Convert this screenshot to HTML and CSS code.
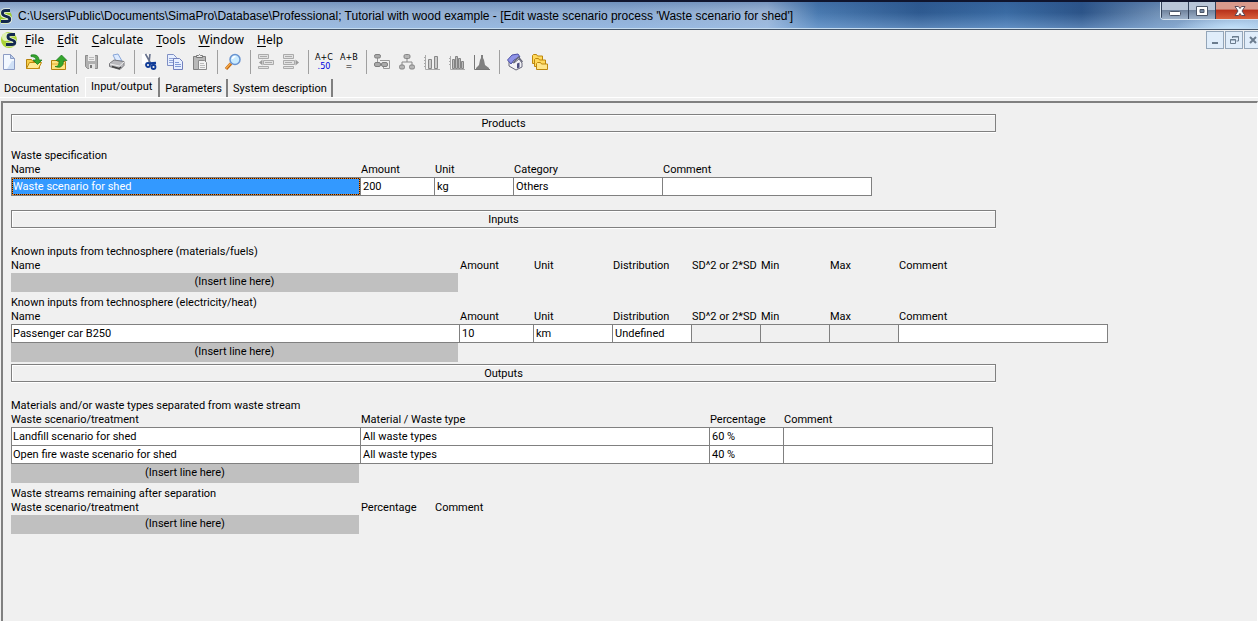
FILE: index.html
```html
<!DOCTYPE html>
<html lang="en">
<head>
<meta charset="utf-8">
<title>SimaPro</title>
<link rel="stylesheet" href="styles.css">
</head>
<body>
<header class="titlebar">
  <svg class="app-logo" viewBox="0 0 16 18" aria-hidden="true">
    <circle cx="5" cy="10" r="7" fill="#9ccb2c"/><path d="M10 3.500H5.500C1.500 3.500 1.500 8 5 9L7 9.600C11 10.600 10.500 14.500 7 14.500H1" fill="none" stroke="#eef6e0" stroke-width="4.500"/><path d="M10 3.500H5.500C1.500 3.500 1.500 8 5 9L7 9.600C11 10.600 10.500 14.500 7 14.500H1" fill="none" stroke="#13294f" stroke-width="2.800"/>
  </svg>
  <h1 class="title">C:\Users\Public\Documents\SimaPro\Database\Professional; Tutorial with wood example - [Edit waste scenario process 'Waste scenario for shed']</h1>
  <div class="window-buttons">
    <button class="win" aria-label="Minimize"><svg viewBox="0 0 14 12"><rect x="1.500" y="6.500" width="11" height="4" rx="1" fill="#fff" stroke="#4a5568"/></svg></button>
    <button class="win" aria-label="Maximize"><svg viewBox="0 0 14 12"><path d="M1.500 1.500h11v9h-11zM5 4.500h4v3H5z" fill="#fff" fill-rule="evenodd" stroke="#4a5568"/></svg></button>
    <button class="win win-close" aria-label="Close"><svg viewBox="0 0 14 12"><path d="M2 1.500h3.500L7 3.500l1.500-2H12L9 6l3 4.500H8.500L7 8.500l-1.500 2H2L5 6z" fill="#fff" stroke="#5a4a58"/></svg></button>
  </div>
</header>

<div class="menubar">
  <svg class="menu-logo" viewBox="0 0 18 18" aria-hidden="true">
    <circle cx="9" cy="9" r="8" fill="#a9d235"/><circle cx="6" cy="6" r="4" fill="#e2f2b4"/><path d="M15 3.500H11C7 3.500 7 7.500 10.500 8.500L12 9C16 10 15.500 13.500 12 13.500H6" fill="none" stroke="#eef6e0" stroke-width="4.200"/><path d="M15 3.500H11C7 3.500 7 7.500 10.500 8.500L12 9C16 10 15.500 13.500 12 13.500H6" fill="none" stroke="#13294f" stroke-width="2.800"/>
  </svg>
  <nav class="menu" aria-label="Main">
    <button><u>F</u>ile</button>
    <button><u>E</u>dit</button>
    <button><u>C</u>alculate</button>
    <button><u>T</u>ools</button>
    <button><u>W</u>indow</button>
    <button><u>H</u>elp</button>
  </nav>
  <div class="child-buttons">
    <button class="child" aria-label="Minimize document"><svg viewBox="0 0 16 16"><path d="M5 11h6" stroke="#6b7c8e" stroke-width="2"/></svg></button>
    <button class="child" aria-label="Restore document"><svg viewBox="0 0 16 16"><path d="M6.500 6V4.500h6V9h-2M6 5h7" fill="none" stroke="#6b7c8e"/><path d="M4.500 7.500h5v4h-5zM4 8h6" fill="none" stroke="#6b7c8e"/></svg></button>
    <button class="child" aria-label="Close document"><svg viewBox="0 0 16 16"><path d="M5 5l6 6M11 5l-6 6" stroke="#6b7c8e" stroke-width="2"/></svg></button>
  </div>
</div>

<div class="toolbar" role="toolbar" aria-label="Tools">
  <div class="group">
    <button class="tool" aria-label="New"><svg viewBox="0 0 18 18"><path d="M3.500 1.500h7l4 4v11h-11z" fill="#f2f8ff" stroke="#8c9cc4"/><path d="M10.500 1.500v4h4z" fill="#b9cdec" stroke="#8c9cc4"/><path d="M12 8h2v8H7z" fill="#cfe0f6"/></svg></button>
    <button class="tool" aria-label="Open"><svg viewBox="0 0 18 18"><path d="M1.500 15.500v-9h5l1.500 2h6.500v7z" fill="#f7cf4c" stroke="#b5810c"/><path d="M1.500 15.500l3-6h12l-3 6z" fill="#ffea95" stroke="#c08a10"/><path d="M6 2c5-1 8 1 8 5h3l-4.500 4.500L8 7h3c0-2-2-3.500-5-3.500z" fill="#35a62c" stroke="#15751a" stroke-width=".7"/></svg></button>
    <button class="tool" aria-label="Save to"><svg viewBox="0 0 18 18"><path d="M1.500 16.500v-9h5l1 1h8v8z" fill="#ffe382" stroke="#b5810c"/><path d="M2 11h13" stroke="#e7ad2c"/><path d="M5 13.500c3 0 4-1 4-6H6L11.500 2 17 7.500h-3.500c0 6-3 8-8.500 6z" fill="#35a62c" stroke="#15751a" stroke-width=".7"/></svg></button>
  </div>
  <div class="group">
    <button class="tool" aria-label="Save"><svg viewBox="0 0 18 18"><path d="M2.500 2.500h12v13h-10l-2-2z" fill="#b0b0b0" stroke="#8c8c8c"/><path d="M5 2h7v6H5z" fill="#ededed"/><path d="M6 11h6v5H6z" fill="#e4e4e4"/><path d="M7 12h2v3H7z" fill="#777"/><path d="M6 4.500h5M6 6.500h5" stroke="#bbb"/></svg></button>
    <button class="tool" aria-label="Print"><svg viewBox="0 0 18 18"><path d="M5 2l5-1 4 7H8z" fill="#dceaff" stroke="#88a6d8"/><path d="M1.500 10.500L6 7l10 1.500v4L12 16.500l-10.500-3z" fill="#b9b9bd" stroke="#77777b"/><path d="M2 11l9.500 2L16 9" fill="none" stroke="#eee"/><path d="M4 13.500l7 2 2-1.500" stroke="#444" stroke-width="1.500" fill="none"/></svg></button>
  </div>
  <div class="group">
    <button class="tool" aria-label="Cut"><svg viewBox="0 0 18 18"><path d="M1 1h6v10H1z" fill="#fff"/><path d="M4.500 1l5 9M9 1l-1 9" stroke="#68728c" stroke-width="1.600"/><circle cx="7" cy="12" r="2" fill="none" stroke="#103c98" stroke-width="1.800"/><circle cx="12.500" cy="14" r="2" fill="none" stroke="#103c98" stroke-width="1.800"/><path d="M9 10.500l6-.5" stroke="#103c98" stroke-width="2.500"/></svg></button>
    <button class="tool" aria-label="Copy"><svg viewBox="0 0 18 18"><path d="M1.500 1.500h6l3 3v8h-9z" fill="#e7efff" stroke="#7f8fc4"/><path d="M3 5.500h5M3 7.500h5M3 9.500h4" stroke="#91a5d8"/><path d="M7.500 5.500h6l3 3v8h-9z" fill="#e7efff" stroke="#7280bd"/><path d="M9 9.500h4M9 11.500h6M9 13.500h6" stroke="#819ad6"/></svg></button>
    <button class="tool" aria-label="Paste"><svg viewBox="0 0 18 18"><path d="M2.500 3.500h12v13h-12z" fill="#b8b8b8" stroke="#7f7f7f"/><path d="M5.500 4.500v-2h2l1-1 1 1h2v2z" fill="#eee" stroke="#777"/><path d="M7.500 7.500h6l2 2v7h-8z" fill="#f3f3f3" stroke="#8a8a8a"/><path d="M9 10.500h4M9 12.500h5M9 14.500h5" stroke="#bbb"/></svg></button>
  </div>
  <div class="group">
    <button class="tool" aria-label="Search"><svg viewBox="0 0 18 18"><path d="M7 10.500L2 16" stroke="#c4660c" stroke-width="3.200"/><path d="M6.500 10.500L2 15.500" stroke="#f5ad4e" stroke-width="1.200"/><circle cx="11" cy="6.500" r="5" fill="#c9ebff" stroke="#6893d0" stroke-width="1.500"/><path d="M8.500 6a3 3 0 0 1 3-2.500" stroke="#fff" stroke-width="1.500" fill="none"/></svg></button>
  </div>
  <div class="group">
    <button class="tool" aria-label="Insert line"><svg viewBox="0 0 18 18"><path d="M1.500 1.500h10v4h-10zM6.500 7.500h10v4h-10zM1.500 13.500h10v2h-10zM3 3.500h7M8 9.500h7" fill="#e2e2e2" stroke="#ababab"/><path d="M5.500 6.500v6L2 9.500z" fill="#999"/></svg></button>
    <button class="tool" aria-label="Delete line"><svg viewBox="0 0 18 18"><path d="M1.500 1.500h10v4h-10zM1.500 7.500h11v4h-11zM1.500 13.500h10v2h-10zM3 3.500h7M3 9.500h7" fill="#e2e2e2" stroke="#ababab"/><path d="M13.500 6.500v6L17 9.500z" fill="#999"/></svg></button>
  </div>
  <div class="group">
    <button class="tool calc"><span>A+C</span><span class="calc-blue">.50</span></button>
    <button class="tool calc"><span>A+B</span><span>=</span></button>
  </div>
  <div class="group">
    <button class="tool" aria-label="Network"><svg viewBox="0 0 18 18"><path d="M4.500 4v8M7 7.500h9.500v8h-6v-3" fill="none" stroke="#999"/><g fill="#aaa" stroke="#808080"><rect x="1.500" y="1.500" width="6" height="3.500" rx="1.500"/><rect x="1.500" y="9.500" width="6" height="4" rx="1.500"/><rect x="8.500" y="9.500" width="6" height="4" rx="1.500"/></g></svg></button>
    <button class="tool" aria-label="Tree"><svg viewBox="0 0 18 18"><path d="M9 5v4M4 12V9h10v3" fill="none" stroke="#888"/><g fill="#b5b5b5" stroke="#858585"><rect x="6" y="1.500" width="6" height="4" rx="1.500"/><rect x="1.500" y="12" width="5" height="4" rx="1.500"/><rect x="11.500" y="12" width="5" height="4" rx="1.500"/></g></svg></button>
    <button class="tool" aria-label="Bar chart"><svg viewBox="0 0 18 18"><path d="M2.500 2v14.500H17M1 4.500h1M1 7.500h1M1 10.500h1M1 13.500h1" fill="none" stroke="#aaa"/><path d="M5.500 6.500h3v9h-3zM11.500 3.500h3v12h-3z" fill="#ccc" stroke="#888"/></svg></button>
    <button class="tool" aria-label="Grouped chart"><svg viewBox="0 0 18 18"><path d="M2.500 3v13.500H17M1 5.500h1M1 8.500h1M1 11.500h1" fill="none" stroke="#aaa"/><path d="M4.500 6.500h2v9h-2zM7.500 3.500h2v12h-2zM10.500 5.500h2v10h-2zM13.500 8.500h2v7h-2z" fill="#bbb" stroke="#858585"/></svg></button>
    <button class="tool" aria-label="Distribution"><svg viewBox="0 0 18 18"><path d="M1.500 2v14.500H17" fill="none" stroke="#777"/><path d="M3 16v-1l3-3 1-5 1-2V2h2v3l1 2 1 5 4 3v1z" fill="#808080"/></svg></button>
  </div>
  <div class="group">
    <button class="tool" aria-label="Home"><svg viewBox="0 0 18 18"><path d="M3 8l5 2 5-4 3 4v4l-6 3-7-4z" fill="#f2f2f6" stroke="#66677a"/><path d="M1.500 7L6 2l6-1 2 3-6 3-3 4z" fill="#8f93e8" stroke="#4b4fa4"/><path d="M7.500 9.500L12.500 4l4 5" fill="none" stroke="#66677a" stroke-width="1.300"/><path d="M11 10.500l2.500-1v5l-2.500 1z" fill="#4c4d80"/></svg></button>
    <button class="tool" aria-label="Folders"><svg viewBox="0 0 18 18"><g fill="#ffd95c" stroke="#bd870d"><path d="M1.500 10.500v-8l1-1h3l1 1.500h5v7.500z"/><path d="M3.500 13.500v-7l1-1h3l1 1.500h6v6.500z"/><path d="M5.500 16.500v-6l1-1h3l1 1.500h6v5.500z" fill="#ffe68a"/></g></svg></button>
  </div>
</div>

<div class="tabs" role="tablist">
  <button class="tab tab-first" role="tab" aria-selected="false">Documentation</button>
  <button class="tab tab-active" role="tab" aria-selected="true">Input/output</button>
  <button class="tab" role="tab" aria-selected="false">Parameters</button>
  <button class="tab" role="tab" aria-selected="false">System description</button>
</div>

<main class="panel">
  <h2 class="band">Products</h2>
  <section class="block block-last">
    <table class="grid grid-products">
      <caption>Waste specification</caption>
      <colgroup><col class="c-name"><col class="c-amount"><col class="c-unit"><col class="c-category"><col class="c-comment"></colgroup>
      <thead><tr><th>Name</th><th>Amount</th><th>Unit</th><th>Category</th><th>Comment</th></tr></thead>
      <tbody class="cells"><tr><td class="selected"><span class="focus">Waste scenario for shed</span></td><td>200</td><td>kg</td><td>Others</td><td></td></tr></tbody>
    </table>
  </section>

  <h2 class="band">Inputs</h2>
  <section class="block">
    <table class="grid grid-inputs">
      <caption>Known inputs from technosphere (materials/fuels)</caption>
      <colgroup><col class="c-wide"><col class="c-amount"><col class="c-unit"><col class="c-unit"><col class="c-stat"><col class="c-stat"><col class="c-stat"><col class="c-comment"></colgroup>
      <thead><tr><th>Name</th><th>Amount</th><th>Unit</th><th>Distribution</th><th>SD^2 or 2*SD</th><th>Min</th><th>Max</th><th>Comment</th></tr></thead>
      <tfoot><tr><td><button class="insert">(Insert line here)</button></td></tr></tfoot>
    </table>
  </section>
  <section class="block block-tight">
    <table class="grid grid-inputs">
      <caption>Known inputs from technosphere (electricity/heat)</caption>
      <colgroup><col class="c-wide"><col class="c-amount"><col class="c-unit"><col class="c-unit"><col class="c-stat"><col class="c-stat"><col class="c-stat"><col class="c-comment"></colgroup>
      <thead><tr><th>Name</th><th>Amount</th><th>Unit</th><th>Distribution</th><th>SD^2 or 2*SD</th><th>Min</th><th>Max</th><th>Comment</th></tr></thead>
      <tbody class="cells"><tr><td>Passenger car B250</td><td>10</td><td>km</td><td>Undefined</td><td class="disabled"></td><td class="disabled"></td><td class="disabled"></td><td></td></tr></tbody>
      <tfoot><tr><td><button class="insert">(Insert line here)</button></td></tr></tfoot>
    </table>
  </section>

  <h2 class="band">Outputs</h2>
  <section class="block">
    <table class="grid grid-outputs">
      <caption>Materials and/or waste types separated from waste stream</caption>
      <colgroup><col class="c-name"><col class="c-type"><col class="c-amount"><col class="c-comment"></colgroup>
      <thead><tr><th>Waste scenario/treatment</th><th>Material / Waste type</th><th>Percentage</th><th>Comment</th></tr></thead>
      <tbody class="cells">
        <tr><td>Landfill scenario for shed</td><td>All waste types</td><td>60 %</td><td></td></tr>
        <tr><td>Open fire waste scenario for shed</td><td>All waste types</td><td>40 %</td><td></td></tr>
      </tbody>
      <tfoot><tr><td><button class="insert">(Insert line here)</button></td></tr></tfoot>
    </table>
  </section>
  <section class="block">
    <table class="grid grid-remaining">
      <caption>Waste streams remaining after separation</caption>
      <colgroup><col class="c-name"><col class="c-amount"><col class="c-comment"></colgroup>
      <thead><tr><th>Waste scenario/treatment</th><th>Percentage</th><th>Comment</th></tr></thead>
      <tfoot><tr><td><button class="insert">(Insert line here)</button></td></tr></tfoot>
    </table>
  </section>
</main>
</body>
</html>
```
FILE: styles.css
```css
* { box-sizing: border-box; }

body {
  margin: 0;
  min-height: 100vh;
  display: flex;
  flex-direction: column;
  overflow: hidden;
  background: #f0f0f0;
  color: #000;
  font: 11px/15px Roboto, sans-serif;
}

button {
  margin: 0;
  padding: 0;
  border: 0;
  background: none;
  color: inherit;
  font: inherit;
}

svg { display: block; }

/* Title bar */
.titlebar {
  display: flex;
  align-items: center;
  height: 30px;
  border-top: 2px solid #10152e;
  border-bottom: 1px solid #45566a;
  box-shadow: inset 0 -1px #c5dcf0;
  background:
    radial-gradient(ellipse 60px 14px at 98% 100%, #c5e3fb, transparent),
    linear-gradient(rgba(40, 80, 140, 0.3), rgba(255, 255, 255, 0) 40%, rgba(160, 200, 245, 0.4)),
    linear-gradient(90deg, #a9c0dc 0, #a3bbda 10%, #96b1d3 30%, #8fadd3 50%, #9cb5d5 61%, #4a7ab0 65%, #2e5a90 73%, #3a6ba3 80%, #2c5488 86%, #6f8fb5 92%, #9ab4d2 100%);
}

.app-logo { flex: none; width: 16px; height: 18px; }

.title {
  flex: 1;
  margin: 0 0 0 2px;
  overflow: hidden;
  white-space: nowrap;
  font: 12px/18px "Liberation Sans", sans-serif;
}

.window-buttons {
  flex: none;
  display: flex;
  align-self: flex-start;
  border: 1px solid #d5e2ef;
  border-top: 0;
  border-right: 0;
  border-radius: 0 0 0 4px;
  overflow: hidden;
}

.win {
  display: grid;
  place-items: center;
  width: 27px;
  height: 17px;
  border-right: 1px solid #33425a;
  background: linear-gradient(#b9c6d8 45%, #71849e 50%, #9eb2ca);
}

.win:first-child { width: 28px; border-left: 1px solid #33425a; }
.win svg { width: 14px; height: 12px; }

.win-close {
  width: 42px;
  padding-left: 6px;
  border-right: 0;
  background: linear-gradient(#d99a8c 40%, #b8321c 50%, #d9603c);
}

/* Menu */
.menubar {
  display: flex;
  align-items: center;
  height: 20px;
  font: 12px/18px "Noto Sans", sans-serif;
}

.menu-logo { width: 18px; height: 18px; }
.menu { flex: 1; display: flex; gap: 13px; padding-left: 7px; }
.menu u { text-underline-offset: 2px; }
.child-buttons { display: flex; gap: 1px; margin-right: -4px; }

.child {
  width: 18px;
  height: 18px;
  border: 1px solid #93a5b8;
  background: #e0edfa;
}

/* Toolbar */
.toolbar { display: flex; align-items: center; height: 24px; }
.group { display: flex; gap: 7px; height: 24px; align-items: center; padding: 0 8px 0 6px; }
.group + .group { border-left: 1px solid #a0a0a0; }
.group:first-child { padding-left: 0; }
.tool { width: 18px; height: 18px; }
.tool svg { width: 18px; height: 18px; }

.calc {
  display: flex;
  flex-direction: column;
  align-items: center;
  font: 9px/9px "DejaVu Sans Condensed", sans-serif;
}

.calc-blue { color: #0000e0; }

/* Tabs */
.tabs {
  display: flex;
  align-items: flex-end;
  height: 24px;
  border-bottom: 1px solid #fff;
}

.tab {
  height: 18px;
  padding: 0 4px 0 5px;
  border-right: 2px solid #808080;
  white-space: nowrap;
}

.tab-first { padding: 0 6px 0 4px; border-right: 0; }

.tab-active {
  height: 20px;
  padding: 0 6px 2px 5px;
  border-top: 1px solid #fff;
  border-left: 1px solid #fff;
}

/* Panel */
.panel {
  flex: 1;
  margin: 3px 0 0 1px;
  padding: 11px 0 0 8px;
  border: 2px solid #808080;
  border-right: 1px solid #fff;
  border-bottom: 0;
}

.band {
  max-width: 985px;
  height: 18px;
  margin: 0 0 16px;
  border: 1px solid #808080;
  box-shadow: inset 1px 1px #fff, 0 1px #fff;
  font: inherit;
  line-height: 18px;
  text-align: center;
}

.block { margin-bottom: 3px; }
.block-tight { margin-bottom: 2px; }
.block-last { margin-bottom: 14px; }

.grid { table-layout: fixed; border-spacing: 0; }
.grid caption { height: 15px; text-align: left; white-space: nowrap; }
.grid th, .grid td { padding: 0; font-weight: normal; text-align: left; white-space: nowrap; }
.grid th { height: 14px; line-height: 14px; }

.grid-products { width: 861px; }
.grid-inputs { width: 1097px; }
.grid-outputs { width: 982px; }
.grid-remaining { width: 633px; }

.c-name { width: 350px; }
.c-wide { width: 449px; }
.c-type { width: 349px; }
.c-amount { width: 74px; }
.c-unit { width: 79px; }
.c-stat { width: 69px; }
.c-category { width: 149px; }
.c-comment { width: 209px; }

.cells td {
  height: 18px;
  padding-left: 2px;
  border-right: 1px solid #808080;
  border-bottom: 1px solid #808080;
  background: #fff;
  line-height: 17px;
}

.cells tr:first-child td { height: 19px; border-top: 1px solid #808080; }
.cells td:first-child { padding-left: 1px; border-left: 1px solid #808080; }
.cells .disabled { background: #f0f0f0; }

.cells .selected:first-child { padding: 0; color: #fff; }

.focus {
  display: block;
  height: 17px;
  border: 1px dotted #f08020;
  background: linear-gradient(#3399ff, #3399ff) padding-box, #2a1400 border-box;
  line-height: 15px;
}

.insert {
  display: block;
  width: calc(100% - 2px);
  height: 19px;
  padding-bottom: 2px;
  background: #c0c0c0;
  text-align: center;
}
```
